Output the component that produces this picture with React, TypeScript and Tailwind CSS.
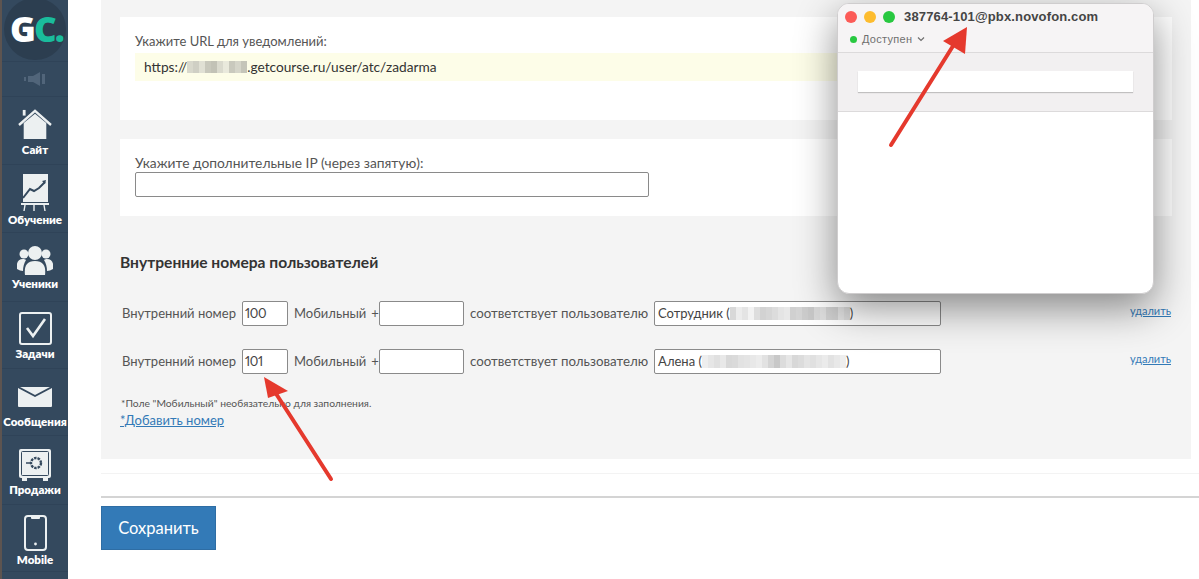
const FONT = "font-['Lato','Open_Sans',sans-serif]";

function Blur({ cells, className }: { cells: string[]; className?: string }) {
  return (
    <span className={`inline-flex h-[13px] align-middle ${className ?? ''}`}>
      {cells.map((c, i) => (
        <span key={i} className="h-full w-[6px]" style={{ background: c }} />
      ))}
    </span>
  );
}

const HouseIcon = () => (
  <svg width="36" height="32" viewBox="0 0 36 34" fill="#ecf0f1">
    <path d="M6 15 L18 5 L30 15 V32 H6 Z" />
    <path d="M5 1h3v6H5z" />
    <path d="M1 17 L18 2 L35 17" fill="none" stroke="#ecf0f1" strokeWidth="2.5" />
  </svg>
);

const BoardIcon = () => (
  <svg width="28" height="38" viewBox="0 0 28 38">
    <path d="M2 0h25v28H2z" fill="#ecf0f1" />
    <path d="M2 24 L9 15 L13 17 L18 14 L24 8" fill="none" stroke="#34495e" strokeWidth="2" />
    <path d="M21 7l4-1-1 4z" fill="#34495e" />
    <path d="M0 29h28v2H0z" fill="#ecf0f1" />
    <path d="M4 31l-1 6M13 31v6M23 31l1 6" stroke="#ecf0f1" strokeWidth="1.4" />
  </svg>
);

const UsersIcon = () => (
  <svg width="36" height="30" viewBox="0 0 36 30" fill="#ecf0f1">
    <circle cx="18" cy="8" r="7" />
    <path d="M8 30c-1-8 1-14 10-14s11 6 10 14c-6 2-14 2-20 0z" />
    <circle cx="7" cy="9" r="4.5" />
    <path d="M0 24c-1-6 1-10 6-10 1 0 2 0 3 1-2 3-3 7-3 11-2 0-4-1-6-2z" />
    <circle cx="29" cy="9" r="4.5" />
    <path d="M36 24c1-6-1-10-6-10-1 0-2 0-3 1 2 3 3 7 3 11 2 0 4-1 6-2z" />
  </svg>
);

const TaskIcon = () => (
  <svg width="33" height="33" viewBox="0 0 33 33" fill="none">
    <rect x="1" y="1" width="31" height="31" rx="2" stroke="#ecf0f1" strokeWidth="2" />
    <path d="M8 16l6 8L26 7" stroke="#ecf0f1" strokeWidth="2.6" />
  </svg>
);

const MailIcon = () => (
  <svg width="34" height="20" viewBox="0 0 34 20" fill="#ecf0f1">
    <path d="M0 1l17 9 17-9v18a1 1 0 0 1-1 1H1a1 1 0 0 1-1-1z" />
    <path d="M2 0h30L17 8z" />
  </svg>
);

const SafeIcon = () => (
  <svg width="34" height="33" viewBox="0 0 34 33" fill="none">
    <rect x="1" y="1" width="32" height="29" rx="2" fill="#ecf0f1" />
    <rect x="3.5" y="3.5" width="27" height="24" rx="1" stroke="#34495e" strokeWidth="1" />
    <circle cx="18" cy="15" r="5" stroke="#34495e" strokeWidth="2.4" strokeDasharray="2.5 1" />
    <path d="M8 15h4" stroke="#34495e" strokeWidth="1.5" />
    <path d="M4 30h5v3H4zM25 30h5v3h-5z" fill="#ecf0f1" />
  </svg>
);

const PhoneIcon = () => (
  <svg width="23" height="36" viewBox="0 0 23 36" fill="none">
    <rect x="1" y="1" width="21" height="34" rx="3" stroke="#ecf0f1" strokeWidth="2" />
    <path d="M7 1h9v2a1 1 0 0 1-1 1H8a1 1 0 0 1-1-1z" fill="#ecf0f1" />
    <circle cx="11.5" cy="29" r="1.4" fill="#ecf0f1" />
  </svg>
);

const MENU = [
  { label: 'Сайт', icon: <HouseIcon />, box: 'h-[68px] pb-[8px] gap-[2px]' },
  { label: 'Обучение', icon: <BoardIcon />, box: 'h-[68px] pb-[6px] gap-[1px]' },
  { label: 'Ученики', icon: <UsersIcon />, box: 'h-[69px] pb-[11px] gap-[2px]' },
  { label: 'Задачи', icon: <TaskIcon />, box: 'h-[67px] pb-[8px] gap-[2px]' },
  { label: 'Сообщения', icon: <MailIcon />, box: 'h-[67px] pb-[7px] gap-[8px]' },
  { label: 'Продажи', icon: <SafeIcon />, box: 'h-[69px] pb-[8px] gap-[2px]' },
  { label: 'Mobile', icon: <PhoneIcon />, box: 'h-[67px] pb-[5px] gap-[2px]' },
];

function Sidebar() {
  return (
    <aside className="flex h-[579px] w-[68px] shrink-0 flex-col overflow-hidden border-l-2 border-l-[#5d5450] bg-[#34495e]">
      <div className="flex h-[62px] items-start justify-center overflow-hidden border-b border-[#2f4358]">
        <div className="-mt-[2px] flex h-[62px] w-[62px] shrink-0 items-center justify-center rounded-full bg-[#2c3e50] pl-[3px] font-['Open_Sans',sans-serif] text-[35px] font-extrabold tracking-[-2px] whitespace-nowrap">
          <span className="text-white">G</span>
          <span className="text-[#1abc9c]">C.</span>
        </div>
      </div>
      <div className="flex h-[35px] items-center justify-center border-b border-[#2f4358]">
        <svg width="22" height="14" viewBox="0 0 22 14" fill="#51657a">
          <path d="M0 5h2v4H0zM4 4h5l7-4v14l-7-4H4zM18 2h3v10h-3z" />
        </svg>
      </div>
      {MENU.map((m) => (
        <div
          key={m.label}
          className={`flex ${m.box} shrink-0 flex-col items-center justify-end border-b border-[#2f4358]`}
        >
          {m.icon}
          <span className={`${FONT} text-[11.5px] leading-[13px] font-extrabold whitespace-nowrap text-white`}>{m.label}</span>
        </div>
      ))}
    </aside>
  );
}

function Field({ className, children }: { className: string; children?: React.ReactNode }) {
  return (
    <div
      className={`flex h-[25px] shrink-0 items-center overflow-hidden rounded-[2px] border border-[#8a8a8a] bg-white px-[3px] text-[13px] whitespace-nowrap text-[#444] ${className}`}
    >
      {children}
    </div>
  );
}

function NumberRow({ num, user, blur }: { num: string; user: string; blur: string[] }) {
  return (
    <div className="flex h-[25px] items-center pr-[20px] pl-[21px] text-[13px] whitespace-nowrap text-[#555]">
      <span className="w-[120px] shrink-0">Внутренний номер</span>
      <Field className="w-[46px] !px-[2px] tracking-[-0.4px] proportional-nums">{num}</Field>
      <span className="ml-[6px] w-[85px] shrink-0">
        Мобильный<span className="ml-[5px]">+</span>
      </span>
      <Field className="w-[85px]" />
      <span className="ml-[6px] w-[184px] shrink-0 text-[13.3px]">соответствует пользователю</span>
      <Field className="w-[287px]">
        {user} (<Blur cells={blur} />)
      </Field>
      <a className="mb-[4px] ml-auto text-[11px] text-[#337ab7] underline">удалить</a>
    </div>
  );
}

function Softphone() {
  return (
    <div className="absolute top-[3px] left-[837px] flex h-[291px] w-[317px] flex-col overflow-hidden rounded-[12px] border border-[#cfcdce] bg-white shadow-[0_14px_40px_rgba(0,0,0,0.45)]">
      <div className="h-[49px] shrink-0 border-b border-[#dcdadb] bg-[#f6f4f5] px-[7px] pt-[6px]">
        <div className="flex h-[14px] items-center gap-[7px]">
          <span className="h-[12px] w-[12px] rounded-full bg-[#fc5b57]" />
          <span className="h-[12px] w-[12px] rounded-full bg-[#fdbc2e]" />
          <span className="h-[12px] w-[12px] rounded-full bg-[#28c840]" />
          <span className="ml-[2px] font-['Liberation_Sans',sans-serif] text-[13px] font-bold tracking-[0.15px] whitespace-nowrap text-[#454545]">
            387764-101@pbx.novofon.com
          </span>
        </div>
        <div className="mt-[7px] flex items-center pl-[5px] font-['Liberation_Sans',sans-serif] text-[11px] tracking-[0.3px] text-[#6f6f6f]">
          <span className="mr-[5px] h-[7px] w-[7px] rounded-full bg-[#28c840]" />
          Доступен
          <svg className="ml-[5px]" width="8" height="6" viewBox="0 0 8 6" fill="none">
            <path d="M1 1.5l3 3 3-3" stroke="#6f6f6f" strokeWidth="1.2" />
          </svg>
        </div>
      </div>
      <div className="h-[59px] shrink-0 border-b border-[#dcdadb] bg-[#f2f0f1] px-[20px] pt-[18px]">
        <div className="h-[21px] bg-white shadow-[0_1px_1px_rgba(0,0,0,0.2)]" />
      </div>
    </div>
  );
}

function Arrows() {
  return (
    <svg className="pointer-events-none absolute inset-0" width="1199" height="579" viewBox="0 0 1199 579">
      <path d="M891 145L958 38" stroke="#e5392d" strokeWidth="4" strokeLinecap="round" />
      <path d="M967 27L943 41L965 54Z" fill="#e5392d" />
      <path d="M331 479L273 389" stroke="#e5392d" strokeWidth="4" strokeLinecap="round" />
      <path d="M264 377L288 391L268 398Z" fill="#e5392d" />
    </svg>
  );
}

const BLUR_1 = ['#d8d8d8', '#ececec', '#e4e4e4', '#f2f2f2', '#dddddd', '#d2d2d2', '#d6d6d6', '#dcdcdc', '#e4e4e4', '#e8e8e8', '#d0d0d0', '#d4d4d4', '#cccccc', '#c8c8c8', '#d8d8d8', '#dedede', '#d0d0d0', '#cfcfcf', '#e2e2e2', '#dadada'];
const BLUR_2 = ['#eeeeee', '#e6e6e6', '#e0e0e0', '#e8e8e8', '#d8d8d8', '#dadada', '#e2e2e2', '#e4e4e4', '#e8e8e8', '#ececec', '#e2e2e2', '#d4d4d4', '#c8c8c8', '#dcdcdc', '#e6e6e6', '#d8d8d8', '#dcdcdc', '#e4e4e4', '#e0e0e0', '#e6e6e6', '#ebebeb', '#e2e2e2', '#e8e8e8', '#eeeeee'];
const BLUR_URL = ['#d8d8cc', '#cfcfc4', '#e0e0d4', '#c8c8bc', '#c2c2b6', '#dadace', '#e9e9dc', '#c9c9bd', '#d5d5c9', '#c5c5b9'];

export default function App() {
  return (
    <div className={`relative flex h-[579px] w-[1199px] overflow-hidden bg-white ${FONT}`}>
      <Sidebar />
      <main className="ml-[33px] flex w-[1098px] flex-col">
        <section className="h-[459px] w-[1090px] shrink-0 bg-[#f4f4f4] pt-[17px]">
          <div className="ml-[19px] h-[103px] w-[1052px] bg-white pt-[16px] pl-[15px]">
            <div className="text-[13px] leading-[16px] text-[#555]">Укажите URL для уведомлений:</div>
            <div className="mt-[4px] flex h-[28px] w-[1019px] items-center bg-[#fdfde8] pl-[9px] text-[13.7px] text-[#333]">
              https://
              <Blur cells={BLUR_URL} className="!h-[12px]" />
              .getcourse.ru/user/atc/zadarma
            </div>
          </div>
          <div className="mt-[19px] ml-[19px] h-[77px] w-[1052px] bg-white pt-[16px] pl-[15px]">
            <div className="text-[13.8px] leading-[16px] text-[#555]">Укажите дополнительные IP (через запятую):</div>
            <div className="mt-[1px] h-[25px] w-[514px] rounded-[2px] border border-[#8a8a8a] bg-white" />
          </div>
          <h3 className="mt-[37px] ml-[19px] text-[15.6px] leading-[18px] font-bold text-[#333]">
            Внутренние номера пользователей
          </h3>
          <div className="mt-[30px] flex flex-col gap-[23px]">
            <NumberRow num="100" user="Сотрудник" blur={BLUR_1} />
            <NumberRow num="101" user="Алена" blur={BLUR_2} />
          </div>
          <p className="mt-[23px] ml-[20px] text-[10.3px] leading-[12px] text-[#555]">*Поле "Мобильный" необязательно для заполнения.</p>
          <a className="mt-[3px] ml-[19px] block text-[13px] leading-[16px] text-[#337ab7] underline">*Добавить номер</a>
        </section>
        <div className="mt-[14px] h-px shrink-0 bg-[#f3f3f3]" />
        <div className="mt-[22px] h-[2px] shrink-0 bg-[#d4d4d4]" />
        <button className="mt-[8px] h-[44px] w-[115px] border border-[#2e6da4] bg-[#337ab7] text-[16.5px] text-white">Сохранить</button>
      </main>
      <Softphone />
      <Arrows />
    </div>
  );
}
